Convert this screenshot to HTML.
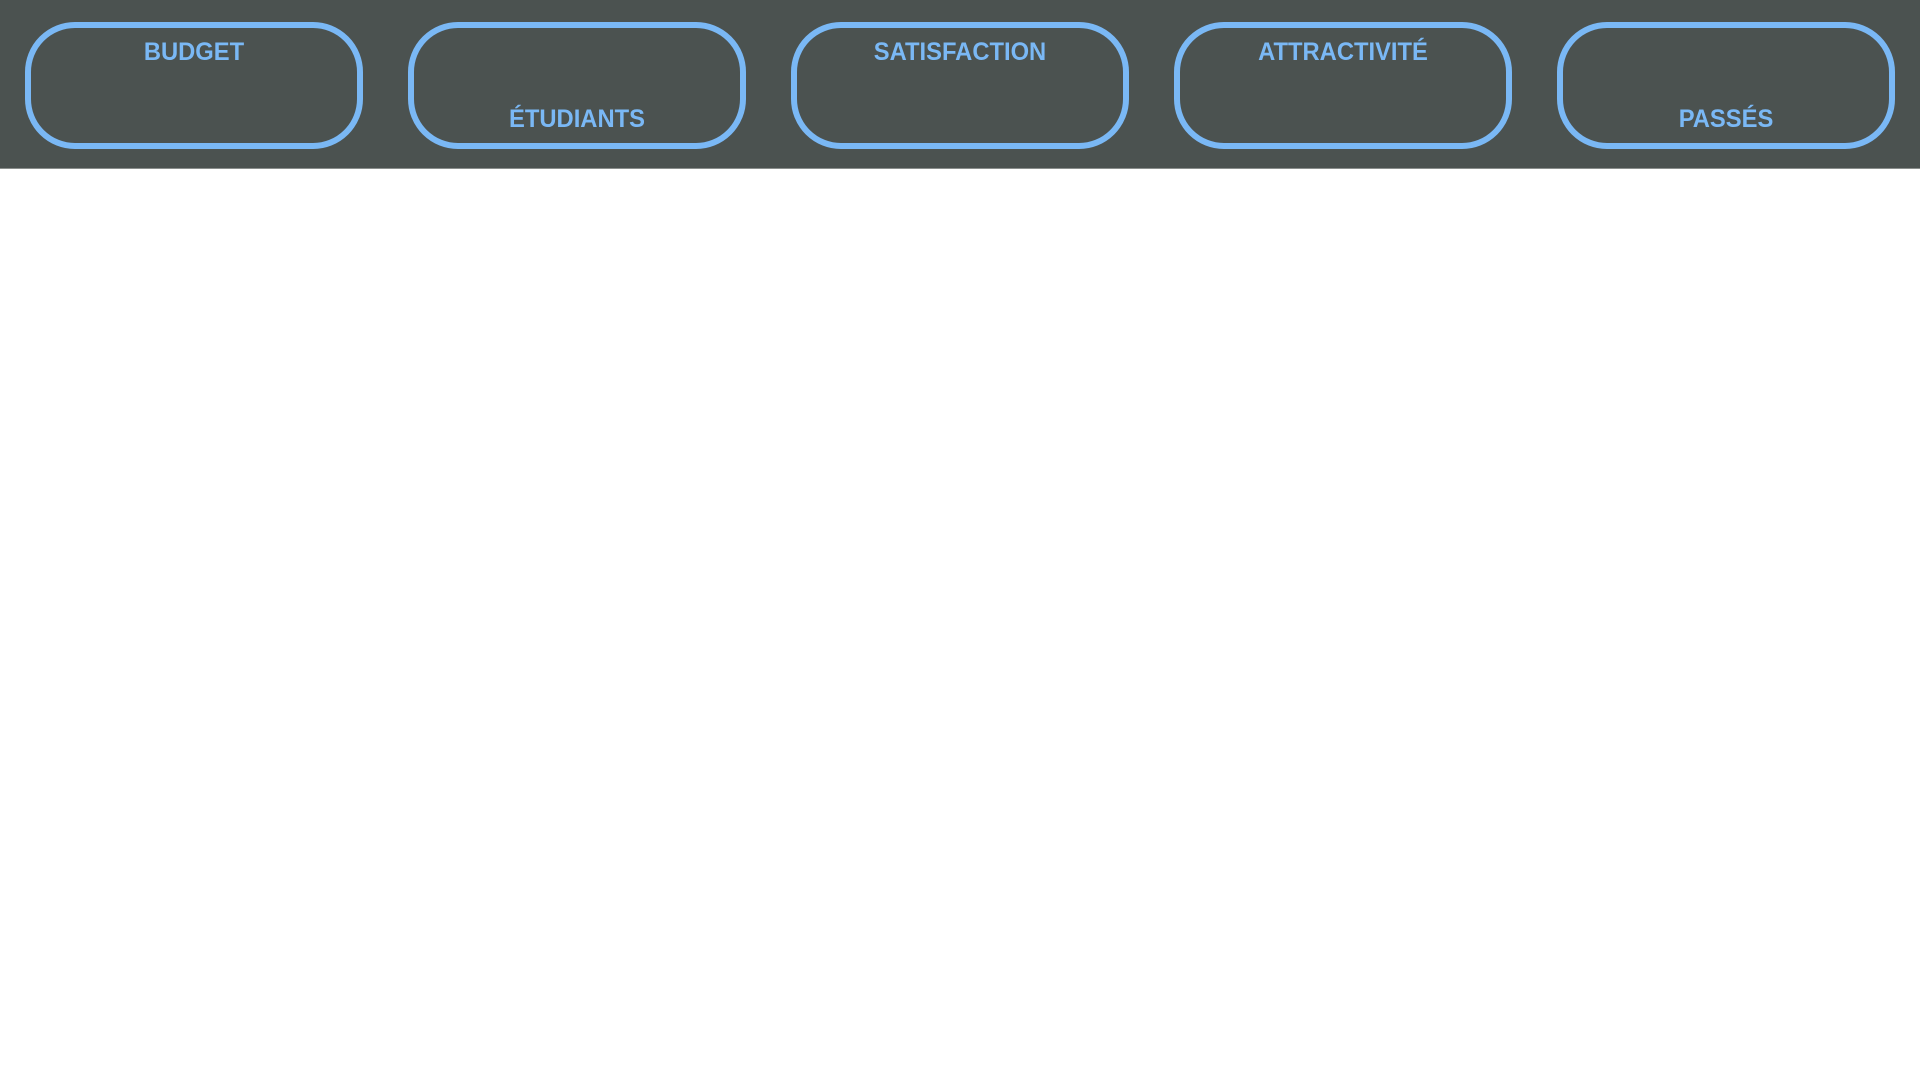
<!DOCTYPE html>
<html><head><meta charset="utf-8"><style>
html,body{margin:0;padding:0;width:1920px;height:1080px;background:#fff;overflow:hidden}
.hdr{position:absolute;left:0;top:0;width:1920px;height:168px;background:#4b5250;border-bottom:1px solid #8a8e8c}
.b{position:absolute;top:22px;width:326px;height:115px;border:6px solid #7ab8f5;border-radius:50px;box-sizing:content-box}
.t{position:absolute;left:0;right:0;text-align:center;color:#7ab8f5;font:bold 25px "Liberation Sans",sans-serif;transform:scaleX(0.95)}
.top{top:10px}.bot{top:77px}
</style></head><body>
<div class="hdr">
<div class="b" style="left:25px"><div class="t top">BUDGET</div></div>
<div class="b" style="left:408px"><div class="t bot">ÉTUDIANTS</div></div>
<div class="b" style="left:791px"><div class="t top">SATISFACTION</div></div>
<div class="b" style="left:1174px"><div class="t top">ATTRACTIVITÉ</div></div>
<div class="b" style="left:1557px"><div class="t bot">PASSÉS</div></div>
</div>
</body></html>
